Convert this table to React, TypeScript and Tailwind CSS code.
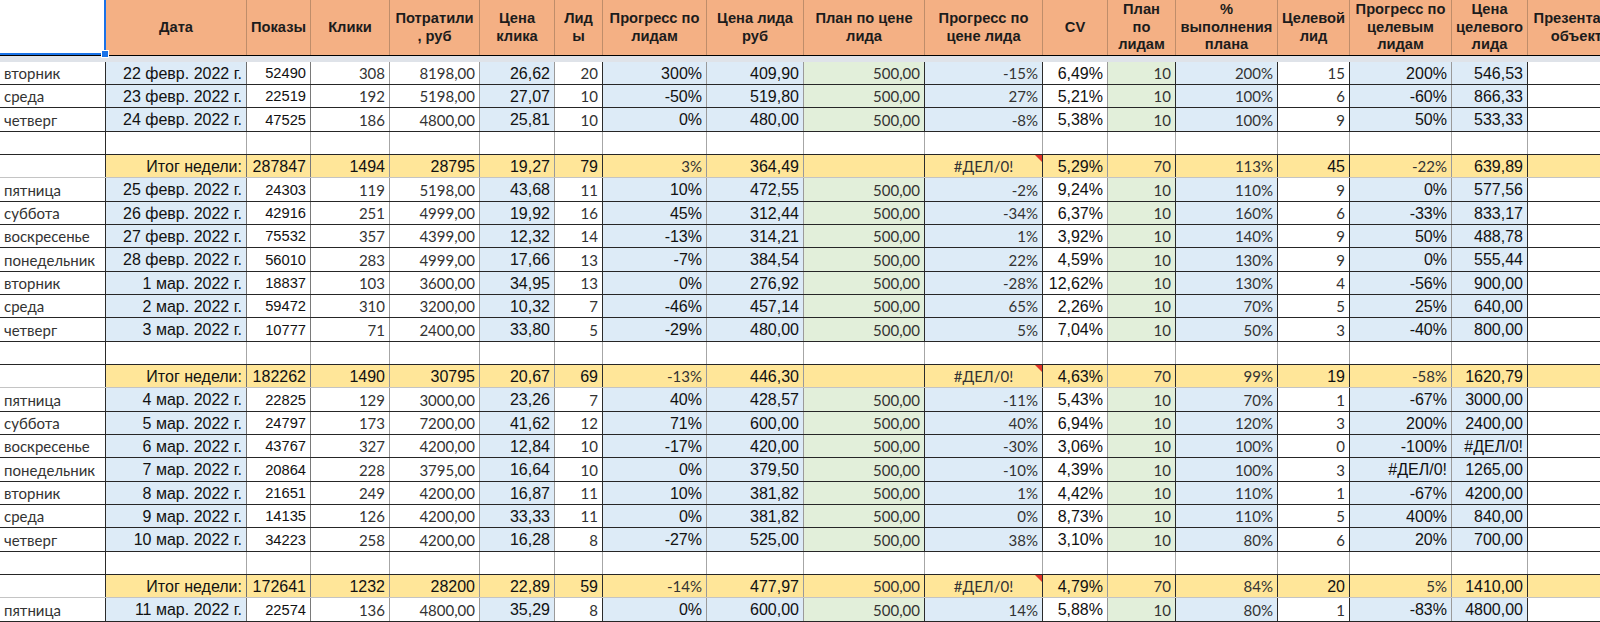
import React from 'react'

const ARIAL = "[font-family:'Liberation_Sans',Arial,sans-serif]"
const CAL = "[font-family:Lato,'Noto_Sans',sans-serif] text-[15px] text-[#333]"
const A16 = "[font-family:'Liberation_Sans',Arial,sans-serif] text-[16px] text-[#111]"
const A15 = "[font-family:'Liberation_Sans',Arial,sans-serif] text-[14.7px] text-[#111]"

const BLUE = 'bg-[#ddebf7]'
const GREEN = 'bg-[#e2efda]'

// column widths / borders / fills / fonts (data row, total row)
const COLS = [
  { w: 'w-[106px]', rb: 'border-[#2b2b2b]', bg: 'bg-white', d: CAL, s: CAL },
  { w: 'w-[141px]', rb: 'border-[#6f6f6f]', bg: BLUE, d: A16, s: A16 },
  { w: 'w-[64px]', rb: 'border-[#7a7a7a]', bg: 'bg-white', d: A15, s: A16 },
  { w: 'w-[79px]', rb: 'border-[#9a9a9a]', bg: 'bg-white', d: CAL, s: A16 },
  { w: 'w-[90px]', rb: 'border-[#9a9a9a]', bg: 'bg-white', d: CAL, s: A16 },
  { w: 'w-[75px]', rb: 'border-[#9a9a9a]', bg: BLUE, d: A16, s: A16 },
  { w: 'w-[48px]', rb: 'border-[#2b2b2b]', bg: 'bg-white', d: CAL, s: A16 },
  { w: 'w-[104px]', rb: 'border-[#9a9a9a]', bg: BLUE, d: A16, s: CAL },
  { w: 'w-[97px]', rb: 'border-[#9a9a9a]', bg: BLUE, d: A16, s: A16 },
  { w: 'w-[121px]', rb: 'border-[#2b2b2b]', bg: GREEN, d: CAL, s: CAL },
  { w: 'w-[118px]', rb: 'border-[#2b2b2b]', bg: BLUE, d: CAL, s: CAL },
  { w: 'w-[65px]', rb: 'border-[#9a9a9a]', bg: 'bg-white', d: A16, s: A16 },
  { w: 'w-[68px]', rb: 'border-[#2b2b2b]', bg: GREEN, d: CAL, s: CAL },
  { w: 'w-[102px]', rb: 'border-[#2b2b2b]', bg: BLUE, d: CAL, s: CAL },
  { w: 'w-[72px]', rb: 'border-[#2b2b2b]', bg: 'bg-white', d: CAL, s: A16 },
  { w: 'w-[102px]', rb: 'border-[#9a9a9a]', bg: BLUE, d: A16, s: CAL },
  { w: 'w-[76px]', rb: 'border-[#2b2b2b]', bg: BLUE, d: A16, s: A16 },
  { w: 'w-[106px]', rb: 'border-[#9a9a9a]', bg: 'bg-white', d: A16, s: A16 },
]

const HEAD = [
  [], ['Дата'], ['Показы'], ['Клики'], ['Потратили', ', руб'], ['Цена', 'клика'], ['Лид', 'ы'],
  ['Прогресс по', 'лидам'], ['Цена лида', 'руб'], ['План по цене', 'лида'], ['Прогресс по', 'цене лида'],
  ['CV'], ['План', 'по', 'лидам'], ['%', 'выполнения', 'плана'], ['Целевой', 'лид'],
  ['Прогресс по', 'целевым', 'лидам'], ['Цена', 'целевого', 'лида'], ['Презентация', 'объекта'],
]

type Row = { t: 'd' | 'e' | 's'; v?: string[] }

const ROWS: Row[] = [
  { t: 'd', v: ['вторник', '22 февр. 2022 г.', '52490', '308', '8198,00', '26,62', '20', '300%', '409,90', '500,00', '-15%', '6,49%', '10', '200%', '15', '200%', '546,53'] },
  { t: 'd', v: ['среда', '23 февр. 2022 г.', '22519', '192', '5198,00', '27,07', '10', '-50%', '519,80', '500,00', '27%', '5,21%', '10', '100%', '6', '-60%', '866,33'] },
  { t: 'd', v: ['четверг', '24 февр. 2022 г.', '47525', '186', '4800,00', '25,81', '10', '0%', '480,00', '500,00', '-8%', '5,38%', '10', '100%', '9', '50%', '533,33'] },
  { t: 'e' },
  { t: 's', v: ['', 'Итог недели:', '287847', '1494', '28795', '19,27', '79', '3%', '364,49', '', '#ДЕЛ/0!', '5,29%', '70', '113%', '45', '-22%', '639,89'] },
  { t: 'd', v: ['пятница', '25 февр. 2022 г.', '24303', '119', '5198,00', '43,68', '11', '10%', '472,55', '500,00', '-2%', '9,24%', '10', '110%', '9', '0%', '577,56'] },
  { t: 'd', v: ['суббота', '26 февр. 2022 г.', '42916', '251', '4999,00', '19,92', '16', '45%', '312,44', '500,00', '-34%', '6,37%', '10', '160%', '6', '-33%', '833,17'] },
  { t: 'd', v: ['воскресенье', '27 февр. 2022 г.', '75532', '357', '4399,00', '12,32', '14', '-13%', '314,21', '500,00', '1%', '3,92%', '10', '140%', '9', '50%', '488,78'] },
  { t: 'd', v: ['понедельник', '28 февр. 2022 г.', '56010', '283', '4999,00', '17,66', '13', '-7%', '384,54', '500,00', '22%', '4,59%', '10', '130%', '9', '0%', '555,44'] },
  { t: 'd', v: ['вторник', '1 мар. 2022 г.', '18837', '103', '3600,00', '34,95', '13', '0%', '276,92', '500,00', '-28%', '12,62%', '10', '130%', '4', '-56%', '900,00'] },
  { t: 'd', v: ['среда', '2 мар. 2022 г.', '59472', '310', '3200,00', '10,32', '7', '-46%', '457,14', '500,00', '65%', '2,26%', '10', '70%', '5', '25%', '640,00'] },
  { t: 'd', v: ['четверг', '3 мар. 2022 г.', '10777', '71', '2400,00', '33,80', '5', '-29%', '480,00', '500,00', '5%', '7,04%', '10', '50%', '3', '-40%', '800,00'] },
  { t: 'e' },
  { t: 's', v: ['', 'Итог недели:', '182262', '1490', '30795', '20,67', '69', '-13%', '446,30', '', '#ДЕЛ/0!', '4,63%', '70', '99%', '19', '-58%', '1620,79'] },
  { t: 'd', v: ['пятница', '4 мар. 2022 г.', '22825', '129', '3000,00', '23,26', '7', '40%', '428,57', '500,00', '-11%', '5,43%', '10', '70%', '1', '-67%', '3000,00'] },
  { t: 'd', v: ['суббота', '5 мар. 2022 г.', '24797', '173', '7200,00', '41,62', '12', '71%', '600,00', '500,00', '40%', '6,94%', '10', '120%', '3', '200%', '2400,00'] },
  { t: 'd', v: ['воскресенье', '6 мар. 2022 г.', '43767', '327', '4200,00', '12,84', '10', '-17%', '420,00', '500,00', '-30%', '3,06%', '10', '100%', '0', '-100%', '#ДЕЛ/0!'] },
  { t: 'd', v: ['понедельник', '7 мар. 2022 г.', '20864', '228', '3795,00', '16,64', '10', '0%', '379,50', '500,00', '-10%', '4,39%', '10', '100%', '3', '#ДЕЛ/0!', '1265,00'] },
  { t: 'd', v: ['вторник', '8 мар. 2022 г.', '21651', '249', '4200,00', '16,87', '11', '10%', '381,82', '500,00', '1%', '4,42%', '10', '110%', '1', '-67%', '4200,00'] },
  { t: 'd', v: ['среда', '9 мар. 2022 г.', '14135', '126', '4200,00', '33,33', '11', '0%', '381,82', '500,00', '0%', '8,73%', '10', '110%', '5', '400%', '840,00'] },
  { t: 'd', v: ['четверг', '10 мар. 2022 г.', '34223', '258', '4200,00', '16,28', '8', '-27%', '525,00', '500,00', '38%', '3,10%', '10', '80%', '6', '20%', '700,00'] },
  { t: 'e' },
  { t: 's', v: ['', 'Итог недели:', '172641', '1232', '28200', '22,89', '59', '-14%', '477,97', '500,00', '#ДЕЛ/0!', '4,79%', '70', '84%', '20', '5%', '1410,00'] },
  { t: 'd', v: ['пятница', '11 мар. 2022 г.', '22574', '136', '4800,00', '35,29', '8', '0%', '600,00', '500,00', '14%', '5,88%', '10', '80%', '1', '-83%', '4800,00'] },
]

function HeaderRow() {
  return (
    <div className="flex h-[56px] border-b border-black">
      {COLS.map((c, j) =>
        j === 0 ? (
          <div key={j} className={`${c.w} shrink-0 relative bg-white border-r-2 border-b-2 border-[#1a73e8]`}>
            <span className="absolute -right-[5px] -bottom-[5px] w-[8px] h-[8px] bg-[#1a73e8] border border-white" />
          </div>
        ) : (
          <div key={j}
            className={`${c.w} shrink-0 bg-[#f4b084] border-r border-[#bf8d6a] flex flex-col items-center justify-center text-center font-bold text-[14.7px] leading-[17.5px] text-[#1c1c1c] whitespace-nowrap ${ARIAL}`}>
            {HEAD[j].map((l, k) => <span key={k}>{l}</span>)}
          </div>
        )
      )}
    </div>
  )
}

function SheetRow({ row, i }: { row: Row; i: number }) {
  const h = i % 3 === 2 ? 'h-[24px]' : 'h-[23px]'
  const rowBorder = row.t === 's' ? 'border-[#c4c4c4]' : 'border-[#262626]'
  return (
    <div className={`flex border-b ${rowBorder} ${h}`}>
      {COLS.map((c, j) => {
        const val = row.v?.[j] ?? ''
        let bg = c.bg
        if (row.t === 'e') bg = 'bg-white'
        if (row.t === 's') bg = j === 0 ? 'bg-white' : 'bg-[#ffe699]'
        const font = row.t === 's' ? c.s : c.d
        let align = j === 0 ? 'justify-start pl-[4px]' : 'justify-end pr-[4px]'
        if (row.t === 's' && j === 10) align = 'justify-center'
        const border = row.t === 'e' && j !== 0 ? 'border-[#a6a6a6]' : c.rb
        return (
          <div key={j}
            className={`${c.w} shrink-0 relative flex items-center pt-[1px] overflow-hidden whitespace-nowrap border-r ${border} ${bg} ${align} ${font}`}>
            {val}
            {row.t === 's' && j === 10 && (
              <svg className="absolute top-0 right-0" width="7" height="7" viewBox="0 0 7 7">
                <polygon points="0,0 7,0 7,7" fill="#e0342b" />
              </svg>
            )}
          </div>
        )
      })}
    </div>
  )
}

export default function App() {
  return (
    <div className="w-[1600px] h-[622px] overflow-hidden bg-white">
      <HeaderRow />
      <div className="h-[6px] bg-[#dfe3e9]" />
      {ROWS.map((r, i) => <SheetRow key={i} row={r} i={i} />)}
    </div>
  )
}
